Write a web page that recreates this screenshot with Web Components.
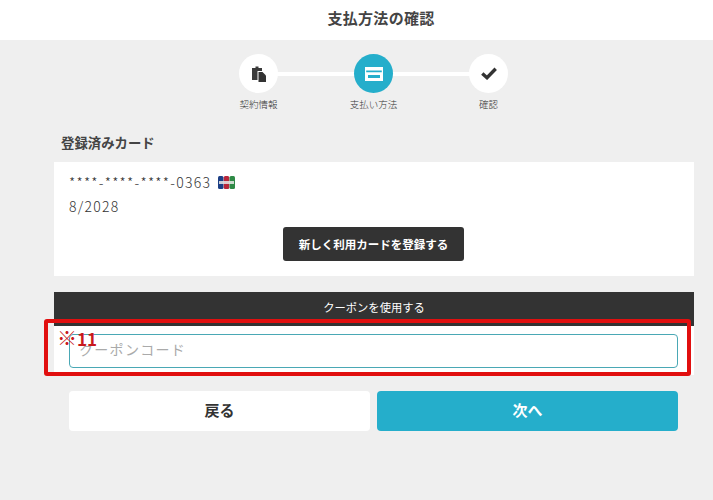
<!DOCTYPE html>
<html lang="ja">
<head>
<meta charset="utf-8">
<title>支払方法の確認</title>
<style>
  html, body { margin: 0; padding: 0; }
  body {
    width: 713px; height: 500px; overflow: hidden; background: #efefef; color: #333;
    font-family: "Noto Sans CJK JP", "Noto Sans", sans-serif;
  }
</style>
</head>
<body>
<page-header>支払方法の確認</page-header>
<step-bar></step-bar>
<section-title>登録済みカード</section-title>
<card-panel></card-panel>
<coupon-panel></coupon-panel>
<nav-buttons></nav-buttons>

<template id="step-bar-tpl">
  <style>
    :host { display: block; height: 68px; padding-top: 14px; box-sizing: content-box; }
    .row { display: grid; grid-template-columns: repeat(3, 115px); margin-left: 201px; width: 345px; position: relative; }
    .line { position: absolute; left: 57px; width: 230px; top: 18px; height: 4px; background: #fff; }
    .step { display: flex; flex-direction: column; align-items: center; position: relative; }
    .dot { width: 39px; height: 39px; border-radius: 50%; background: #fff; display: flex; align-items: center; justify-content: center; }
    .on .dot { background: #25aecb; }
    .label { font-size: 9.500px; line-height: 14px; margin-top: 4px; color: #333; font-weight: 300; }
  </style>
  <div class="row">
    <div class="line"></div>
    <div class="step">
      <div class="dot">
        <svg width="14" height="16" viewBox="0 0 14 16"><path fill="#3a3a3a" d="M0 2h3.500V.5h3V2H10v3H5.500v9H0z"/><path fill="#333" d="M6.500 6H10.500L14 9.500V16H6.500z"/></svg>
      </div>
      <div class="label">契約情報</div>
    </div>
    <div class="step on">
      <div class="dot">
        <svg width="18" height="14" viewBox="0 0 18 14"><path fill="#fff" fill-rule="evenodd" d="M0 0h18v14H0zM1.200 3.500v1.800h15.600V3.500zM3 8v3h12V8z"/></svg>
      </div>
      <div class="label">支払い方法</div>
    </div>
    <div class="step">
      <div class="dot">
        <svg width="16" height="13" viewBox="0 0 16 13"><path fill="none" stroke="#333" stroke-width="3.400" d="M1.300 6.500l4.700 4.200 8.700-9"/></svg>
      </div>
      <div class="label">確認</div>
    </div>
  </div>
</template>

<template id="card-panel-tpl">
  <style>
    :host { display: block; margin: 10px 19px 16px 54px; background: #fff; height: 114px; box-sizing: border-box; padding: 10px 15px 0; font: 300 14px "Noto Sans CJK JP", sans-serif; color: #333; letter-spacing: 1.250px; }
    .num { display: flex; align-items: center; gap: 7px; height: 20px; }
    .exp { height: 20px; line-height: 20px; margin-top: 4px; }
    .act { display: flex; justify-content: center; margin-top: 11px; margin-left: -1px; }
    .btn { width: 181px; height: 34px; border-radius: 3px; background: #333; color: #fff; font: 700 11.500px/34px "Noto Sans CJK JP", sans-serif; letter-spacing: 0; text-align: center; }
  </style>
  <div class="num">
    <span>****-****-****-0363</span>
    <svg width="17" height="13" viewBox="0 0 17 13">
      <rect x="0" width="5.500" height="13" rx="1.500" fill="#1c3f85"/>
      <rect x="5.750" width="5.500" height="13" rx="1.500" fill="#b8263a"/>
      <rect x="11.500" width="5.500" height="13" rx="1.500" fill="#2f8a46"/>
      <rect x="1" y="5" width="15" height="3" fill="#e8e8e8" opacity=".85"/>
    </svg>
  </div>
  <div class="exp">8/2028</div>
  <div class="act"><div class="btn">新しく利用カードを登録する</div></div>
</template>

<template id="coupon-panel-tpl">
  <style>
    :host { display: block; margin: 0 19px 0 54px; position: relative; }
    .bar { height: 34px; background: #333; color: #fff; font-size: 11.300px; line-height: 31px; text-align: center; }
    .body { background: #fff; height: 49px; padding: 8px 16px 0 15px; box-sizing: border-box; }
    input { display: block; width: 100%; height: 34px; box-sizing: border-box; border: 1px solid #4aa8b5; border-radius: 4px; padding: 0 9px 5px; font: 14px "Noto Sans CJK JP", sans-serif; letter-spacing: 1.300px; outline: 0; background: #fff; }
    input::placeholder { color: #aaa; opacity: 1; }
    .mark { position: absolute; left: -10px; top: 27px; width: 647px; height: 57px; box-sizing: border-box; border: 4px solid #e10f0f; border-radius: 3px; }
    .tag { position: absolute; left: 3px; top: 36px; font: 700 17px/22px "Noto Sans CJK JP", sans-serif; color: #c8181c; white-space: nowrap; }
    .tag span { font-weight: 300; font-size: 20px; line-height: 1; }
  </style>
  <div class="bar">クーポンを使用する</div>
  <div class="body"><input placeholder="クーポンコード"></div>
  <div class="mark"></div>
  <div class="tag"><span>※</span>11</div>
</template>

<template id="nav-buttons-tpl">
  <style>
    :host { display: flex; gap: 7px; margin: 16px 35px 0 69px; }
    div { flex: 1; height: 40px; line-height: 38px; border-radius: 4px; text-align: center; font-weight: 700; font-size: 15px; background: #fff; color: #333; }
    .next { background: #25aecb; color: #fff; }
  </style>
  <div>戻る</div>
  <div class="next">次へ</div>
</template>

<script>
  const fromTemplate = id => class extends HTMLElement {
    constructor() {
      super();
      this.attachShadow({ mode: 'open' });
      this.shadowRoot.appendChild(document.getElementById(id).content.cloneNode(true));
    }
  };

  customElements.define('page-header', class extends HTMLElement {
    constructor() {
      super();
      this.attachShadow({ mode: 'open' }).innerHTML = `
        <style>
          :host { display: block; height: 40px; background: #fff; text-align: center; font-weight: 700; font-size: 15px; line-height: 36px; color: #444; letter-spacing: .3px; padding-left: 49px; box-sizing: border-box; }
        </style>
        <slot></slot>`;
    }
  });

  customElements.define('section-title', class extends HTMLElement {
    constructor() {
      super();
      this.attachShadow({ mode: 'open' }).innerHTML = `
        <style>
          :host { display: block; margin-left: 61px; font-weight: 700; font-size: 13.400px; line-height: 20px; padding-top: 10px; color: #444; }
        </style>
        <slot></slot>`;
    }
  });

  customElements.define('step-bar', fromTemplate('step-bar-tpl'));
  customElements.define('card-panel', fromTemplate('card-panel-tpl'));
  customElements.define('coupon-panel', fromTemplate('coupon-panel-tpl'));
  customElements.define('nav-buttons', fromTemplate('nav-buttons-tpl'));
</script>
</body>
</html>
